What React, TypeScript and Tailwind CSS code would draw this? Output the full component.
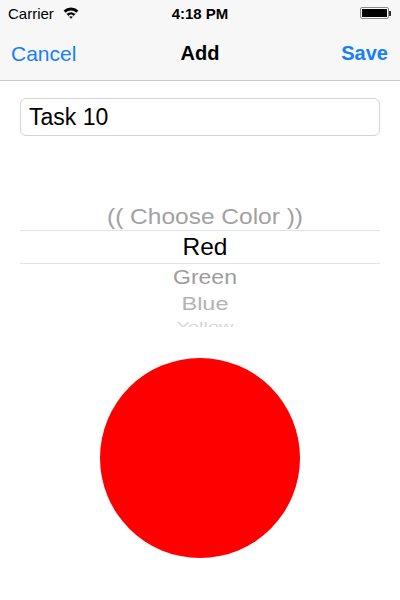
import React from "react";

function Wifi() {
  return (
    <svg width="16" height="12" viewBox="0 0 16 12" className="block">
      <path d="M8 11.5 L0.6 3.6 A10.6 10.6 0 0 1 15.4 3.6 Z" fill="#000" />
      <path d="M8 11.5 L2.6 5.8 A7.6 7.6 0 0 1 13.4 5.8 Z" fill="#f7f7f7" />
      <path d="M8 11.5 L3.7 6.9 A6.2 6.2 0 0 1 12.3 6.9 Z" fill="#000" />
      <path d="M8 11.5 L5.5 8.8 A3.6 3.6 0 0 1 10.5 8.8 Z" fill="#f7f7f7" />
      <path d="M8 11.5 L6.5 9.9 A2.1 2.1 0 0 1 9.5 9.9 Z" fill="#000" />
    </svg>
  );
}

function Battery() {
  return (
    <div className="flex items-center">
      <div className="w-[29px] h-[12px] border border-[#8a8a8a] rounded-[2px] p-[1px] bg-[#f7f7f7]">
        <div className="w-full h-full bg-black" />
      </div>
      <div className="w-[2px] h-[5px] bg-[#333]" />
    </div>
  );
}

export default function App() {
  return (
    <div className="w-[400px] h-[600px] bg-white overflow-hidden font-['Liberation_Sans',Arial,sans-serif] text-black">
      {/* Top bars */}
      <div className="bg-[#f7f7f7] border-b border-[#c8c8c8]">
        <div className="h-[25px] relative flex items-center px-[8px] pt-[1px]">
          <div className="flex items-center gap-[9px]">
            <span className="text-[15px] leading-none">Carrier</span>
            <Wifi />
          </div>
          <div className="absolute left-0 right-0 top-0 h-[25px] flex items-center justify-center pt-[1px]">
            <span className="text-[15px] leading-none font-semibold">4:18 PM</span>
          </div>
          <div className="ml-auto mr-[1px]">
            <Battery />
          </div>
        </div>
        <div className="h-[55px] relative flex items-center justify-between pl-[11px] pr-[12px] pt-[1px]">
          <span className="text-[21px] leading-none text-[#157efb]">Cancel</span>
          <span className="absolute left-0 right-0 text-center text-[20px] leading-none font-bold">Add</span>
          <span className="text-[20px] leading-none font-bold text-[#157efb]">Save</span>
        </div>
      </div>

      {/* Text field */}
      <div className="px-[20px] pt-[17px]">
        <div className="h-[38px] border border-[#d4d4d4] rounded-[6px] flex items-center pl-[8px]">
          <span className="text-[23px] leading-none">Task 10</span>
        </div>
      </div>

      {/* Picker */}
      <div className="mt-[59px] h-[132px] overflow-hidden px-[20px] flex flex-col">
        <div className="h-[35px] shrink-0 flex items-center justify-center pt-[9px] pl-[10px]">
          <span className="text-[24.5px] leading-none text-[#a2a2a2] inline-block scale-y-[0.9]">(( Choose Color ))</span>
        </div>
        <div className="h-[34px] shrink-0 border-t border-b border-[#e2e2e2] flex items-center justify-center pl-[10px]">
          <span className="text-[24.5px] leading-none text-black">Red</span>
        </div>
        <div className="h-[25px] shrink-0 flex items-center justify-center pt-[2px] pl-[10px]">
          <span className="text-[23px] leading-none text-[#9c9c9c] inline-block scale-y-[0.9]">Green</span>
        </div>
        <div className="h-[22px] shrink-0 flex items-center justify-center pt-[7px] pl-[10px]">
          <span className="text-[23.5px] leading-none text-[#b3b3b3] inline-block scale-y-[0.82]">Blue</span>
        </div>
        <div className="h-[30px] shrink-0 flex items-center justify-center pl-[10px]">
          <span className="text-[20px] leading-none text-[#d6d6d6] inline-block scale-y-[0.65]">Yellow</span>
        </div>
      </div>

      {/* Circle */}
      <div className="mt-[31px] flex justify-center">
        <div className="w-[200px] h-[200px] rounded-full bg-[#ff0000]" />
      </div>
    </div>
  );
}
